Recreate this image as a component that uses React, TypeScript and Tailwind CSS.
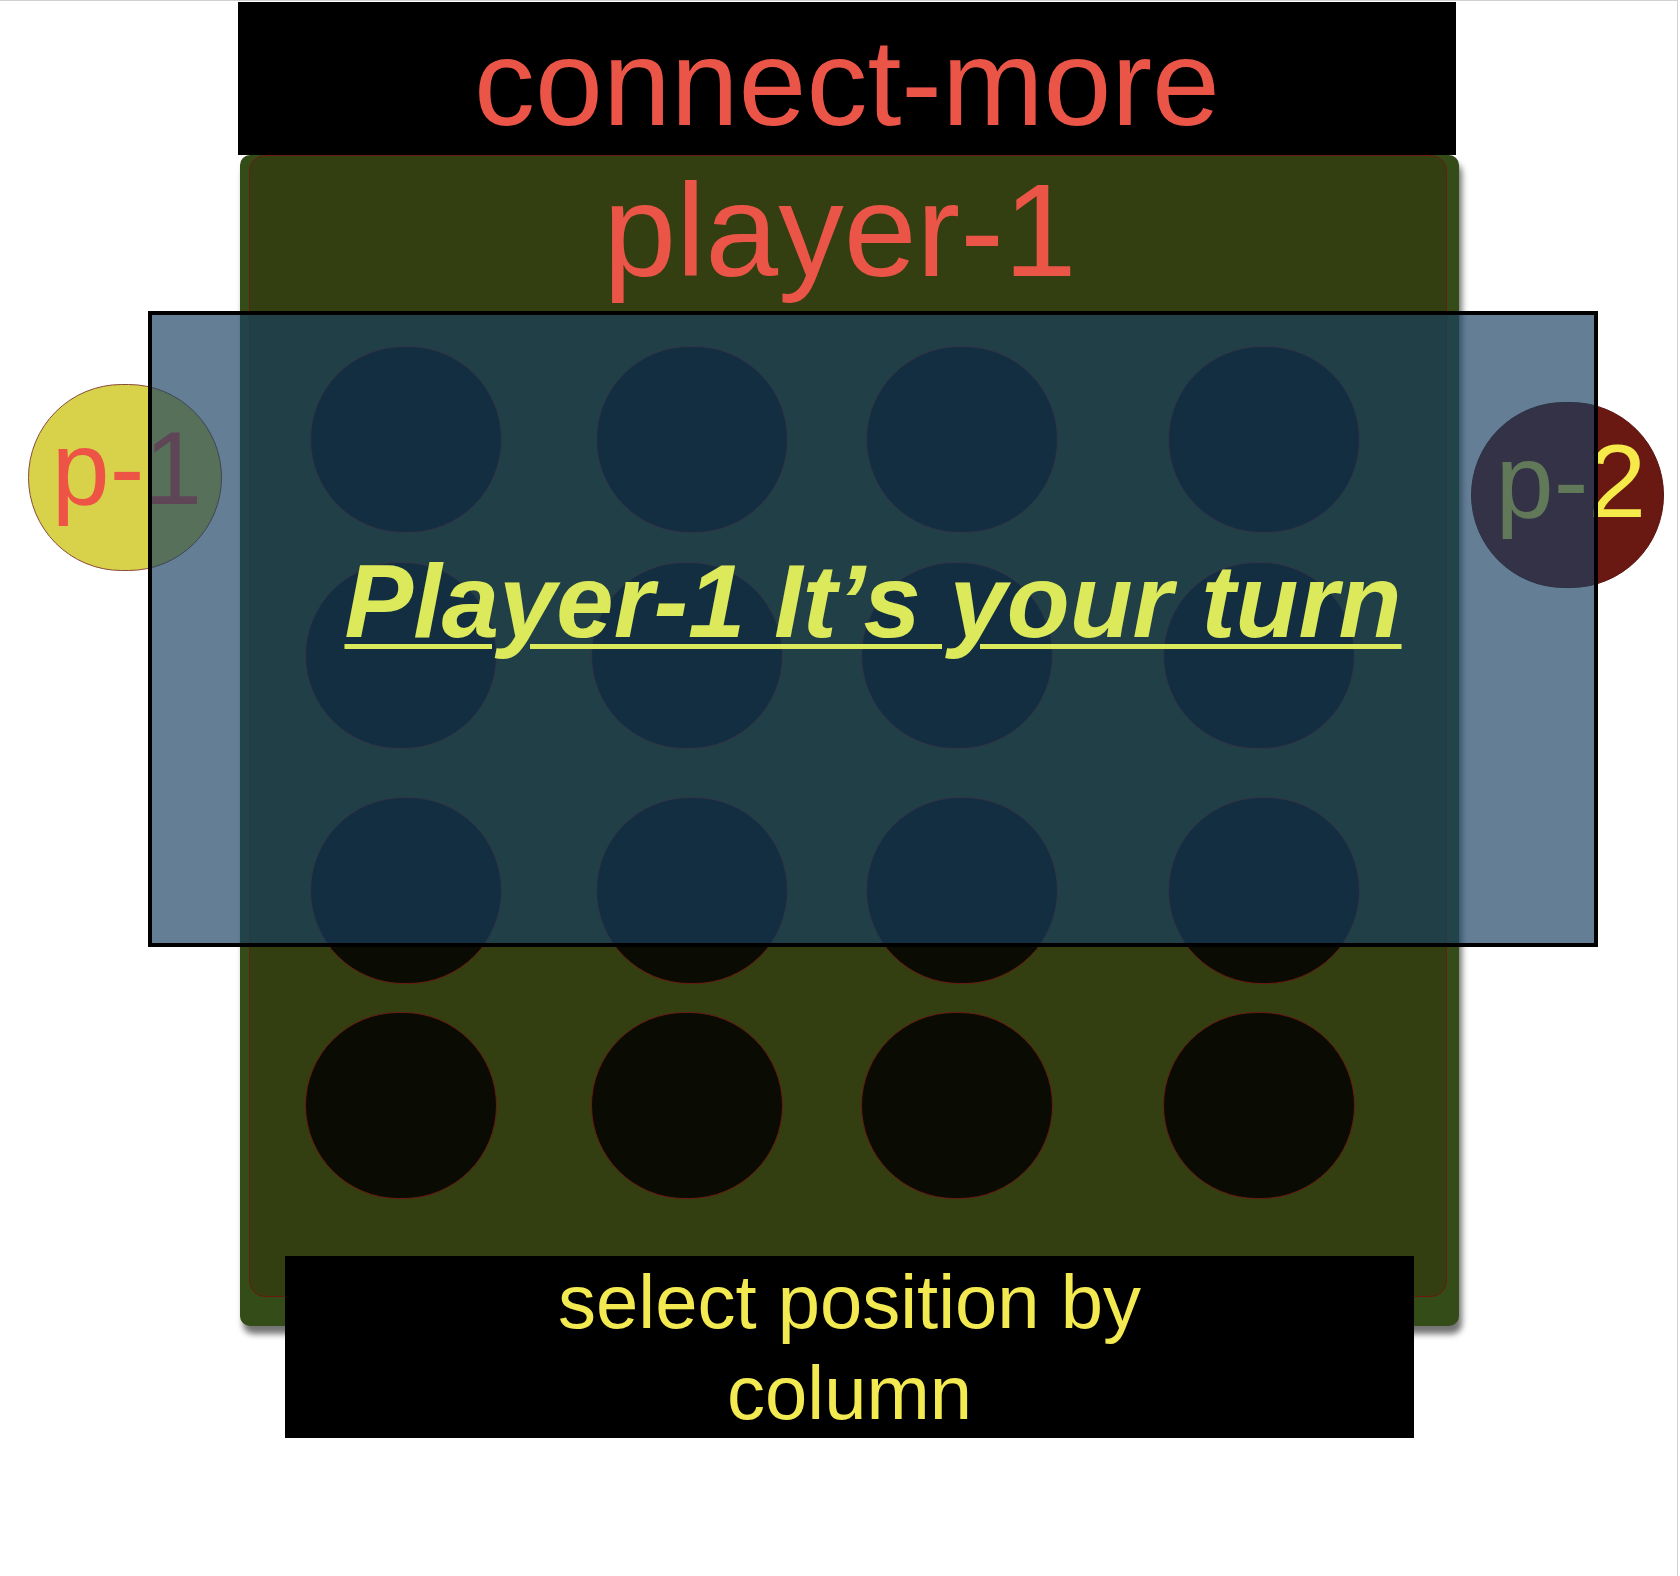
import React from "react";

const rows = [
  { row: "", lead: "ml-[60px]" },
  { row: "mt-[29px]", lead: "ml-[55px]" },
  { row: "mt-[48px]", lead: "ml-[60px]" },
  { row: "mt-[28px]", lead: "ml-[55px]" },
];

const gaps = ["", "ml-[94px]", "ml-[78px]", "ml-[110px]"];

const Hole: React.FC<{ className?: string }> = ({ className = "" }) => (
  <div className={`w-[192px] h-[187px] shrink-0 rounded-full bg-[#0a0c03] border border-[#6b1b12] ${className}`} />
);

const App: React.FC = () => {
  return (
    <div className="relative w-[1678px] h-[1576px] bg-white border-t border-r border-[#d0d0d0] font-['Liberation_Sans',Arial,sans-serif] overflow-hidden">
      <div className="ml-[238px] mt-[1px] flex flex-col items-start">
        {/* title bar */}
        <div className="w-[1218px] h-[153px] bg-black pt-[20px] text-center text-[122px] leading-none text-[#eb5547]">
          connect-more
        </div>

        {/* board */}
        <div className="ml-[2px] w-[1219px] bg-[#344c17] rounded-[10px] pb-[29px] shadow-[3px_8px_6px_rgba(0,0,0,0.55)]">
          <div className="ml-[9px] w-[1198px] bg-[#333f10] border border-[#6b1b12] rounded-[16px] pb-[97px]">
            <div className="h-[190px] pt-[9px] pr-[16px] text-center text-[131px] leading-none text-[#eb5547]">player-1</div>
            {rows.map((r, i) => (
              <div key={i} className={`flex ${r.row}`}>
                {gaps.map((g, j) => (
                  <Hole key={j} className={j === 0 ? r.lead : g} />
                ))}
              </div>
            ))}
          </div>
        </div>

        {/* hint */}
        <div className="relative -mt-[70px] ml-[47px] w-[1129px] h-[182px] bg-black text-center text-[76px] leading-[91px] text-[#f2ea50]">
          select position by
          <br />
          column
        </div>
      </div>

      {/* player badges */}
      <div className="absolute left-[28px] top-[383px] z-10 w-[194px] h-[187px] rounded-full bg-[#d8d24b] border border-[#8a4a3a] flex items-center justify-center pl-[4px] pb-[19px]">
        <span className="text-[104px] leading-none text-[#ee5445]">p-1</span>
      </div>
      <div className="absolute left-[1471px] top-[401px] z-10 w-[193px] h-[186px] rounded-full bg-[#6a1812] border border-[#5a1410] flex items-center justify-center pl-[7px] pb-[28px]">
        <span className="text-[104px] leading-none text-[#f6ea4a]">p-2</span>
      </div>

      {/* turn overlay */}
      <div className="absolute left-[148px] top-[310px] z-20 w-[1450px] h-[636px] border-4 border-black bg-[rgba(24,64,97,0.67)]">
        <div className="pt-[235px] text-center text-[103px] leading-none font-bold italic underline decoration-[5px] underline-offset-[7px] text-[#dce95b]">
          Player-1 It’s your turn
        </div>
      </div>
    </div>
  );
};

export default App;
